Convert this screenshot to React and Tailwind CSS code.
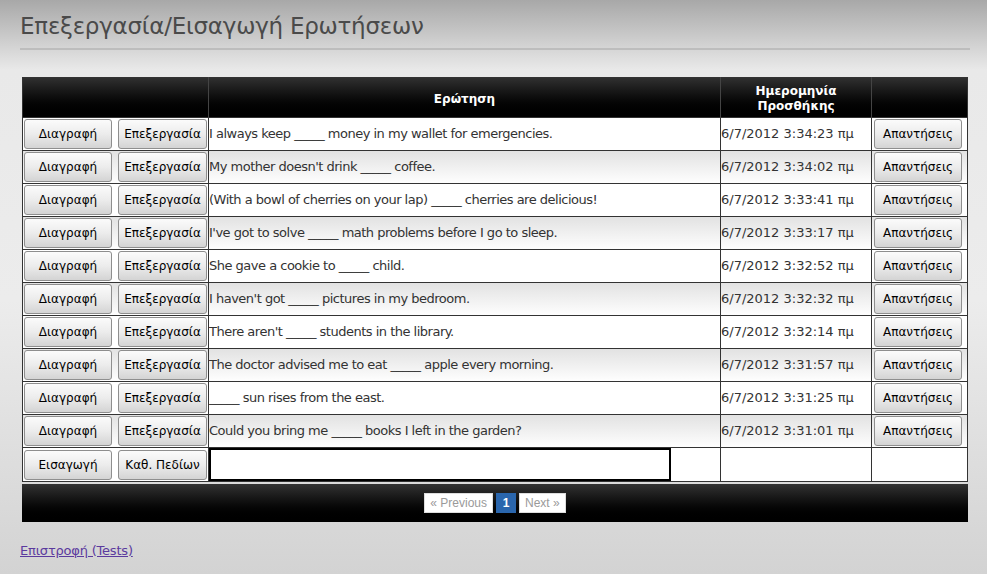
import React from 'react';

const rows = [
  ['I always keep _____ money in my wallet for emergencies.', '6/7/2012 3:34:23 πμ'],
  ["My mother doesn't drink _____ coffee.", '6/7/2012 3:34:02 πμ'],
  ['(With a bowl of cherries on your lap) _____ cherries are delicious!', '6/7/2012 3:33:41 πμ'],
  ["I've got to solve _____ math problems before I go to sleep.", '6/7/2012 3:33:17 πμ'],
  ['She gave a cookie to _____ child.', '6/7/2012 3:32:52 πμ'],
  ["I haven't got _____ pictures in my bedroom.", '6/7/2012 3:32:32 πμ'],
  ["There aren't _____ students in the library.", '6/7/2012 3:32:14 πμ'],
  ['The doctor advised me to eat _____ apple every morning.', '6/7/2012 3:31:57 πμ'],
  ['_____ sun rises from the east.', '6/7/2012 3:31:25 πμ'],
  ['Could you bring me _____ books I left in the garden?', '6/7/2012 3:31:01 πμ'],
];

const Btn = ({ children, w = 'w-[88px]' }) => (
  <button
    className={`${w} h-[30px] rounded-[3px] border border-[#8e8e8e] bg-gradient-to-b from-[#fbfbfb] via-[#ececec] to-[#d4d4d4] text-[12px] text-black leading-none`}
  >
    {children}
  </button>
);

export default function App() {
  return (
    <div
      className="min-h-[574px] bg-[linear-gradient(to_bottom,#a8a8a8_0px,#e9e9e9_70px,#ececec_300px,#d3d3d3_574px)] px-[20px] pt-[10px] text-[#333]"
      style={{ fontFamily: '"DejaVu Sans", Verdana, sans-serif' }}
    >
      <h1 className="text-[23px] leading-[32px] tracking-[-0.25px] text-[#4a4a4a] font-normal">
        Επεξεργασία/Εισαγωγή Ερωτήσεων
      </h1>
      <div className="mt-[6px] h-[2px] w-[950px] bg-[#bdbdbd]" />

      <div className="mt-[27px] ml-[2px] w-[946px]">
        <table className="w-full border-collapse border border-[#333] text-[13px]">
          <colgroup>
            <col className="w-[186px]" />
            <col className="w-[512px]" />
            <col className="w-[151px]" />
            <col className="w-[96px]" />
          </colgroup>
          <thead>
            <tr className="h-[40px] bg-gradient-to-b from-[#303030] to-black text-white text-[12px] font-bold">
              <th className="border-r border-[#444]"></th>
              <th className="border-r border-[#444] pt-[3px]">Ερώτηση</th>
              <th className="border-r border-[#444] leading-[15px] pt-[3px]">
                Ημερομηνία
                <br />
                Προσθήκης
              </th>
              <th></th>
            </tr>
          </thead>
          <tbody>
            {rows.map(([q, d], i) => (
              <tr
                key={i}
                className={`h-[33px] ${i % 2 === 1 ? 'bg-gradient-to-b from-[#e2e2e2] to-white' : 'bg-white'}`}
              >
                <td className="border border-[#333] px-[1px]">
                  <div className="flex gap-[6px]">
                    <Btn>Διαγραφή</Btn>
                    <Btn w="w-[89px]">Επεξεργασία</Btn>
                  </div>
                </td>
                <td className="border border-[#333] px-0 whitespace-nowrap tracking-[-0.5px]">{q}</td>
                <td className="border border-[#333] px-0 whitespace-nowrap">{d}</td>
                <td className="border border-[#333] pl-[2px]">
                  <Btn>Απαντήσεις</Btn>
                </td>
              </tr>
            ))}
            <tr className="h-[33px] bg-white">
              <td className="border border-[#333] px-[1px]">
                <div className="flex gap-[6px]">
                  <Btn>Εισαγωγή</Btn>
                  <Btn w="w-[89px]">Καθ. Πεδίων</Btn>
                </div>
              </td>
              <td className="border border-[#333] p-0">
                <div className="h-[33px] w-[462px] border-2 border-black bg-white" />
              </td>
              <td className="border border-[#333]"></td>
              <td className="border border-[#333]"></td>
            </tr>
          </tbody>
        </table>

        <div
          className="mt-[2px] flex h-[38px] items-center justify-center gap-[3px] bg-gradient-to-b from-[#333] to-black text-[12px]"
          style={{ fontFamily: '"Liberation Sans", Arial, sans-serif' }}
        >
          <span className="flex h-[20px] items-center border border-[#ddd] bg-white px-[5px] text-[#9a9a9a]">
            « Previous
          </span>
          <span className="flex h-[20px] w-[20px] items-center justify-center bg-[#2a66ad] font-bold text-white">
            1
          </span>
          <span className="flex h-[20px] items-center border border-[#ddd] bg-white px-[5px] text-[#9a9a9a]">
            Next »
          </span>
        </div>
      </div>

      <a href="#" className="mt-[19px] inline-block text-[13px] tracking-[-0.2px] text-[#5b3a9e] underline">
        Επιστροφή (Tests)
      </a>
    </div>
  );
}
